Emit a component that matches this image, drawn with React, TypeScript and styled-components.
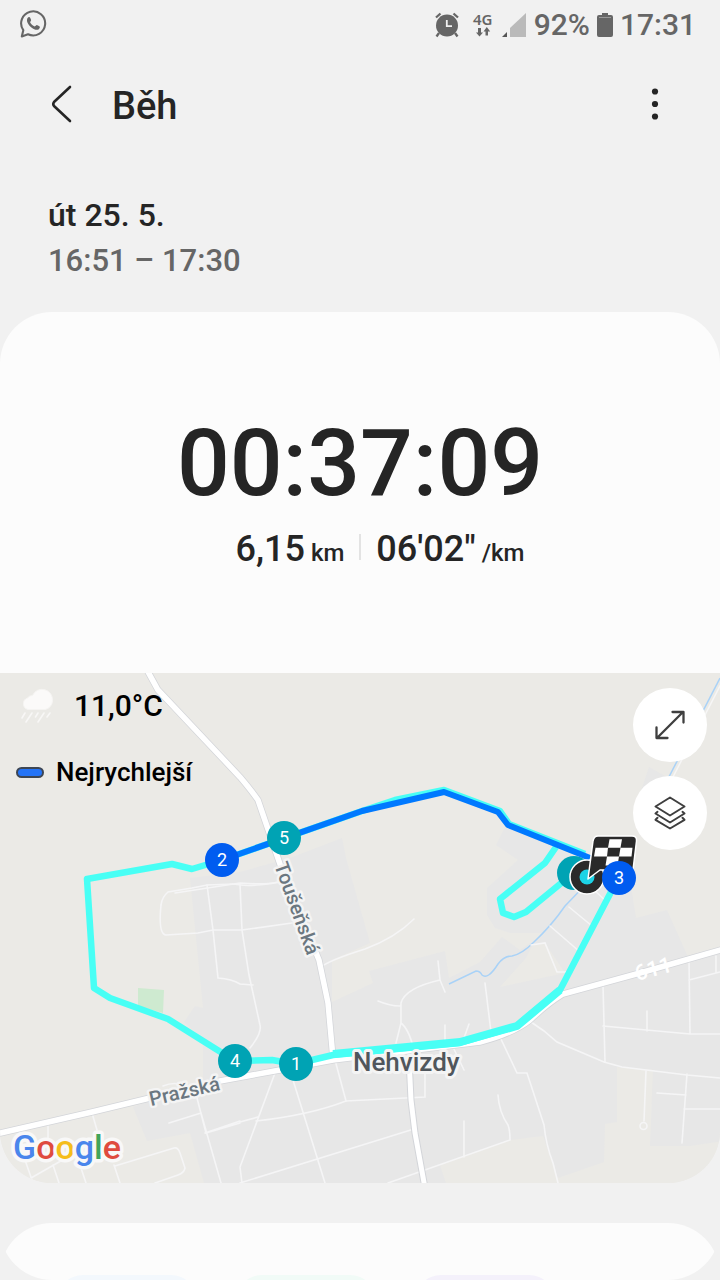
import React from "react";
import styled, { createGlobalStyle } from "styled-components";

const GlobalStyle = createGlobalStyle`
  *, *::before, *::after { box-sizing: border-box; }
  body {
    margin: 0;
    background: #f1f1f1;
    color: #252525;
    font-family: Roboto, "Noto Sans", sans-serif;
    font-weight: 500;
  }
  h1, h2, p { margin: 0; font-weight: 500; }
`;

const Page = styled.div`
  display: flex;
  flex-direction: column;
`;

const StatusBar = styled.div`
  display: flex;
  justify-content: space-between;
  align-items: center;
  height: 49px;
  padding: 0 24px 0 20px;
  color: #666666;
  font-size: 30px;
  line-height: 50px;
`;

const StatusGroup = styled.div`
  display: flex;
  align-items: center;
  gap: 7px;
`;

const Network = styled.div`
  display: flex;
  flex-direction: column;
  align-items: center;
  width: 22px;
  margin: 0 0 0 5px;
  font: 600 15px/15px "Noto Sans", sans-serif;
`;

const AppBar = styled.header`
  display: flex;
  align-items: center;
  height: 110px;
  padding: 0 40px 0 37px;
`;

const IconButton = styled.button`
  display: grid;
  place-items: center;
  width: 50px;
  height: 50px;
  padding: 0;
  border: 0;
  background: none;
  color: #252525;
  cursor: pointer;
`;

const Title = styled.h1`
  flex: 1;
  padding: 4px 0 0 25px;
  font-size: 38px;
  line-height: 50px;
`;

const DateBlock = styled.section`
  padding: 34px 48px 29px;
  font-size: 32px;
  line-height: 45px;
`;

const TimeRange = styled.p`
  color: #666666;
  font-size: 31px;
`;

const Summary = styled.section`
  padding: 96px 24px 95px;
  border-radius: 52px 52px 0 0;
  background: #fcfcfc;
`;

const Duration = styled.h2`
  font-size: 93px;
  line-height: 112px;
  text-align: center;
`;

const Metrics = styled.div`
  display: flex;
  justify-content: center;
  align-items: center;
  gap: 15px;
  padding: 7px 0 6px 40px;
`;

const Divider = styled.span`
  width: 2px;
  height: 26px;
  margin-bottom: 6px;
  background: #e3e3e3;
`;

const Metric = styled.p`
  font-size: 36px;
  line-height: 45px;
`;

const Unit = styled.span`
  margin-left: 6px;
  font-size: 24px;
  line-height: 24px;
`;

const MapCard = styled.section`
  position: relative;
  overflow: hidden;
  border-radius: 0 0 52px 52px;
  background: #ebeae6;
`;

const MapDrawing = styled.svg`
  display: block;
  width: 100%;
  height: auto;
  font-family: Roboto, "Noto Sans", sans-serif;
`;

const MapInfo = styled.div`
  position: absolute;
  top: 8px;
  left: 16px;
  color: #000000;
`;

const InfoRow = styled.div<{ $gap: number; $size: number; $indent?: number }>`
  display: flex;
  align-items: center;
  gap: ${(p) => p.$gap}px;
  height: 48px;
  margin-bottom: 19px;
  padding-left: ${(p) => p.$indent ?? 0}px;
  font-size: ${(p) => p.$size}px;
`;

const FastKey = styled.span`
  width: 28px;
  height: 11px;
  border: 2px solid #3d4654;
  border-radius: 6px;
  background: #2474f7;
`;

const MapControls = styled.div`
  position: absolute;
  top: 15px;
  right: 13px;
  display: flex;
  flex-direction: column;
  gap: 14px;
`;

const RoundButton = styled(IconButton)`
  width: 74px;
  height: 74px;
  border-radius: 50%;
  background: #ffffff;
`;

const NextSection = styled.div`
  height: 97px;
  padding-top: 40px;
  overflow: hidden;
  border-radius: 0 0 52px 52px;
`;

const NextCard = styled.section`
  display: flex;
  gap: 39px;
  height: 120px;
  padding: 52px 57px 0;
  border-radius: 52px 52px 0 0;
  background: #fcfcfc;
`;

const Tile = styled.div<{ $color: string }>`
  width: 140px;
  height: 68px;
  border-radius: 26px;
  background: ${(p) => p.$color};
`;

const WhatsAppIcon = () => (
  <svg width="27" height="30" viewBox="0 0 27 30" fill="none">
    <path d="M3.3 20.2A12 12 0 1 1 8 24.2L1.8 26.4Z" stroke="currentColor" strokeWidth="2.1" strokeLinejoin="round" />
    <path d="M7.4 8.2C8.4 6.6 9.7 6.6 10.3 7.9L11.1 10.1C11.3 11 10.2 11.6 10.1 12.2C10.8 13.9 12.8 15.8 14.8 16.4C15.5 16.4 16.1 15 16.9 15.1L19.4 16.3C20.3 16.9 19.9 18.6 18.5 19.4C16.9 20.3 14 19.6 11.4 17.4C8.4 15 6 11.3 7.4 8.2Z" fill="currentColor" />
  </svg>
);

const AlarmIcon = () => (
  <svg width="26" height="26" viewBox="0 0 26 26" fill="none">
    <circle cx="13" cy="13.5" r="11" fill="currentColor" />
    <path d="M2 5.5L6.5 1.5M24 5.5L19.5 1.5M5 21L2.5 24.5M21 21L23.5 24.5" stroke="currentColor" strokeWidth="2.3" />
    <path d="M12.8 8V14.2H18" stroke="#f1f1f1" strokeWidth="1.8" />
  </svg>
);

const DataArrows = () => (
  <svg width="16" height="10" viewBox="0 0 16 10" fill="currentColor">
    <path d="M3 1H6V5.5H8L4.5 9.5L1 5.5H3ZM10.5 8.5H13V4.5H15.2L11.8 0L8.5 4.5H10.5Z" />
  </svg>
);

const SignalIcon = () => (
  <svg width="26" height="26" viewBox="0 0 26 26">
    <path d="M1 25L6 20V25Z" fill="#555555" />
    <path d="M9 25V16L25 1V25Z" fill="#bababa" />
  </svg>
);

const BatteryIcon = () => (
  <svg width="16" height="24" viewBox="0 0 16 24">
    <path d="M5 0H11V2H14Q16 2 16 4V22Q16 24 14 24H2Q0 24 0 22V4Q0 2 2 2H5Z" fill="currentColor" />
    <path d="M2 4.5H14" stroke="#999999" />
  </svg>
);

const BackIcon = () => (
  <svg width="24" height="40" viewBox="0 0 24 40" fill="none">
    <path d="M20 3L4 18Q2.500 20 4 22L20 37" stroke="currentColor" strokeWidth="2.600" strokeLinecap="round" strokeLinejoin="round" />
  </svg>
);

const MoreIcon = () => (
  <svg width="8" height="34" viewBox="0 0 8 34" fill="currentColor">
    <circle cx="4" cy="4.500" r="3.100" />
    <circle cx="4" cy="17" r="3.100" />
    <circle cx="4" cy="29.500" r="3.100" />
  </svg>
);

const RainIcon = () => (
  <svg width="34" height="38" viewBox="0 0 34 38">
    <path d="M8 23.500H25A9 9 0 0 0 32.500 15A10.500 10.500 0 0 0 12.500 9.500A6 6 0 0 0 7.500 12A6 6 0 0 0 8 23.500Z" fill="#fbfaf9" stroke="#f5f4f2" strokeWidth="1" />
    <path d="M5 27L2 32M12 27L6 36M18 27L15.500 31M24 27L18 36M30 27L27 31" stroke="#f8f7f6" strokeWidth="1.600" strokeLinecap="round" />
  </svg>
);

const ExpandIcon = () => (
  <svg width="34" height="34" viewBox="0 0 34 34" fill="none" stroke="#3f3f3f" strokeWidth="2.300" strokeLinecap="round" strokeLinejoin="round">
    <path d="M4.500 29.500L29.500 4.500M19.500 4H30.500V14.500M3.500 19.500V30H14.500" />
  </svg>
);

const LayersIcon = () => (
  <svg width="34" height="36" viewBox="0 0 34 36" fill="none" stroke="#3f3f3f" strokeWidth="2" strokeLinecap="round" strokeLinejoin="round">
    <path d="M17 2.500L31.500 11.500L17 20.500L2.500 11.500ZM4.500 16.800L2.500 18.500L17 27.500L31.500 18.500L29.500 16.800M4.500 22.800L2.500 24.800L17 33.500L31.500 24.800L29.500 22.800" />
  </svg>
);

const minorRoads = [
  "M175 893L240 883Q280 886 284 878",
  "M161 905Q162 897 168 892L192 888L207 885L234 884Q250 888 285 881",
  "M161 905Q158 934 166 935L198 933L213 930H242L292 923",
  "M207 885L213 930L218 978Q232 979 240 984L253 985",
  "M240 884L242 930L249 975L260 1025Q262 1033 250 1048",
  "M321 967Q330 960 365 949Q395 938 414 919",
  "M438 961L440 980Q405 988 401 1003V1023L396 1043M378 1001Q390 1006 400 1006M401 1023Q410 1030 415 1055M440 980L445 992",
  "M445 1025V1043M469 1024L464 1038M453 1047L464 1070",
  "M275 1073L240 1167L242 1183M293 1080L325 1183M335 1060L346 1101L425 1097V1065",
  "M240 1122L258 1117M256 1121Q310 1115 346 1101M240 1183L414 1129M388 1183L510 1140Q510 1130 508 1125Q499 1112 498 1095",
  "M464 1157V1121M169 1123L201 1113L221 1183M197 1098L206 1133L240 1123M205 1133L240 1121",
  "M48 1123V1140M92 1113L97 1130M25 1160L32 1180M31 1178L80 1150M53 1165L59 1183M80 1165L86 1183M114 1165L120 1183",
  "M115 1166L174 1148Q178 1147 180 1153L185 1168Q184 1173 178 1175L155 1183",
  "M163 1086Q175 1081 185 1086",
  "M603 985L605 1062M603 1026L690 1034H720M647 1011V1031M689 960L690 1034M689 980L720 972M716 956V973",
  "M531 1022L544 1031L557 1042L604 1062L622 1067L687 1075L720 1078",
  "M500 1037L517 1073H527L544 1125Q546 1145 553 1163L558 1183M485 983L491 1032",
  "M646 1071L644 1121M687 1074L682 1143M657 1093L686 1095M684 1109H720",
  "M569 907L592 926M550 926L580 952M531 945L545 943L557 972H567M594 890L607 902",
];

const roadNorth = "M147 670L158 690L240 777Q251 790 258 800L282 870L319 960L328 1003L333 1058";
const roadWest = "M-4 1134L92 1112L150 1098L220 1081L280 1070L333 1060L480 1042Q512 1034 530 1020Q548 1003 563 994L640 973L724 949";
const roadSouth = "M409 1058L411 1100L415 1133L425 1188";

const Marker = ({ x, y, n, color }: { x: number; y: number; n: string; color: string }) => (
  <g>
    <circle cx={x} cy={y} r="17" fill={color} />
    <text x={x} y={y + 6} fill="#ffffff" fontSize="18" fontWeight="400" textAnchor="middle">{n}</text>
  </g>
);

const RouteMap = () => (
  <MapDrawing viewBox="0 673 720 510" role="img" aria-label="Mapa trasy">
    <rect y="673" width="720" height="510" fill="#ebeae6" />
    <path fill="#e7e7e7" d="M190 878L240 872L290 858L342 838L346 858L370 943L332 960V1002L373 983L369 971L445 951L449 978L480 962L502 937L520 950L545 933H510L495 928L487 915V888L518 860L496 845L505 827L560 850L630 880L636 918L667 910L688 957L724 949V1141L690 1146H650L653 1070L617 1067V1122L605 1124L604 1162L558 1178L543 1136L510 1140L440 1165L446 1183H204L190 1133L147 1141L133 1107L203 1080V1040L184 1022L195 1006L203 1008Z" />
    <path fill="#ebeae6" d="M500 987L526 958L532 946L545 943L565 973Z" />
    <path fill="#e7e7e7" d="M649 767L672 780L638 800Z" />
    <path fill="#ceead0" d="M138 988L164 990L163 1013L138 1006Z" />
    <g fill="none" stroke="#a9d2f7" strokeWidth="1.500">
      <path d="M449 984L476 971Q480 971 482 975Q488 980 498 964Q504 956 512 956Q522 954 534 942Q552 925 565 906L590 880" />
      <path d="M720 678L640 833" />
    </g>
    <path d="M722 682L642 837" stroke="#f6f6f6" strokeWidth="1.500" />
    <g fill="none" stroke="#f5f5f6" strokeWidth="1.600" strokeLinecap="round">
      {minorRoads.map((d) => <path key={d} d={d} />)}
      <circle cx="643.500" cy="1126" r="3.500" />
    </g>
    <g fill="none" stroke="#d3d5d9">
      <path d={roadNorth} strokeWidth="7" />
      <path d={roadWest} strokeWidth="7" />
      <path d={roadSouth} strokeWidth="7" />
    </g>
    <g fill="none" stroke="#ffffff">
      <path d={roadNorth} strokeWidth="5.500" />
      <path d={roadWest} strokeWidth="5.500" />
      <path d={roadSouth} strokeWidth="5" />
    </g>
    <g fill="none" stroke="#48fff5" strokeWidth="6.500" strokeLinejoin="round">
      <path d="M612 890L560 990L517 1026L460 1043L333 1055L295 1064L272 1060L235 1061L168 1019L110 998L94 988L87 879L172 864L192 869L222 860L362 811L395 800L444 790L500 811L509 824L585 854" />
      <path d="M556 847L545 863L500 899L503 913L514 917L526 912L565 880" />
      <path d="M560 990L517 1026L460 1042L333 1054" strokeWidth="8" />
    </g>
    <path d="M222 860L362 811L444 792L498 812L508 825L590 858" fill="none" stroke="#0079ff" strokeWidth="6" strokeLinejoin="round" />

    <g fill="#6b7780" stroke="#f4f4f4" strokeWidth="5" strokeLinejoin="round" paintOrder="stroke" fontSize="20" fontWeight="500">
      <text transform="translate(274 865) rotate(70)">Toušeňská</text>
      <text transform="translate(151 1106) rotate(-13)">Pražská</text>
    </g>
    <text x="353" y="1071" fill="#50565c" stroke="#f4f4f4" strokeWidth="6" strokeLinejoin="round" paintOrder="stroke" fontSize="26" fontWeight="500">Nehvizdy</text>
    <text transform="translate(637 981) rotate(-15)" fill="#ffffff" fontSize="22" fontWeight="500">611</text>

    <Marker x={235} y={1061} n="4" color="#00a3b4" />
    <Marker x={296} y={1064} n="1" color="#00a3b4" />
    <Marker x={284} y={838} n="5" color="#00a3b4" />
    <Marker x={222} y={860} n="2" color="#005cf0" />
    <circle cx="574" cy="873" r="17" fill="#00a3b4" />
    <circle cx="587" cy="877" r="17" fill="#2a2a2a" stroke="#ffffff" strokeWidth="1.500" />
    <circle cx="587" cy="877" r="7.500" fill="#1cd3e6" />
    <path d="M598 836H632Q637 836 636.500 841L633 870H600L588 879L593 841Q594 836 598 836Z" fill="#2a2a2a" stroke="#ffffff" strokeWidth="1.500" strokeLinejoin="round" />
    <path fill="#ffffff" d="M609.500 839.200H622L620.500 847.800H632.500L631.500 856.500H619L617.500 865.500H605.500L607 856.500H594L595.500 847.800H608ZM608 847.800L607 856.500H619L620.500 847.800Z" fillRule="evenodd" />
    <Marker x={619} y={878} n="3" color="#005cf0" />

    <text x="13" y="1159" fontSize="34" fontWeight="500" stroke="#f8f8f8" strokeWidth="7" strokeLinejoin="round" paintOrder="stroke">
      <tspan fill="#4a86ec">G</tspan>
      <tspan fill="#df4b3f">o</tspan>
      <tspan fill="#f5bd1b">o</tspan>
      <tspan fill="#4a86ec">g</tspan>
      <tspan fill="#41a45b">l</tspan>
      <tspan fill="#df4b3f">e</tspan>
    </text>
  </MapDrawing>
);

export default function App() {
  return (
    <Page>
      <GlobalStyle />
      <StatusBar>
        <WhatsAppIcon />
        <StatusGroup>
          <AlarmIcon />
          <Network>
            4G
            <DataArrows />
          </Network>
          <SignalIcon />
          <span>92%</span>
          <BatteryIcon />
          <span>17:31</span>
        </StatusGroup>
      </StatusBar>
      <AppBar>
        <IconButton aria-label="Zpět"><BackIcon /></IconButton>
        <Title>Běh</Title>
        <IconButton aria-label="Další možnosti"><MoreIcon /></IconButton>
      </AppBar>
      <main>
        <DateBlock>
          <p>út 25. 5.</p>
          <TimeRange>16:51 – 17:30</TimeRange>
        </DateBlock>
        <Summary>
          <Duration>00:37:09</Duration>
          <Metrics>
            <Metric>6,15<Unit>km</Unit></Metric>
            <Divider />
            <Metric>06'02"<Unit>/km</Unit></Metric>
          </Metrics>
        </Summary>
        <MapCard>
          <RouteMap />
          <MapInfo>
            <InfoRow $gap={20} $size={30} $indent={4}>
              <RainIcon />
              <span>11,0°C</span>
            </InfoRow>
            <InfoRow $gap={12} $size={26}>
              <FastKey />
              <span>Nejrychlejší</span>
            </InfoRow>
          </MapInfo>
          <MapControls>
            <RoundButton aria-label="Zvětšit mapu"><ExpandIcon /></RoundButton>
            <RoundButton aria-label="Vrstvy mapy"><LayersIcon /></RoundButton>
          </MapControls>
        </MapCard>
        <NextSection>
          <NextCard>
            <Tile $color="#f3f8fd" />
            <Tile $color="#f1fbf7" />
            <Tile $color="#f4f1fb" />
          </NextCard>
        </NextSection>
      </main>
    </Page>
  );
}
